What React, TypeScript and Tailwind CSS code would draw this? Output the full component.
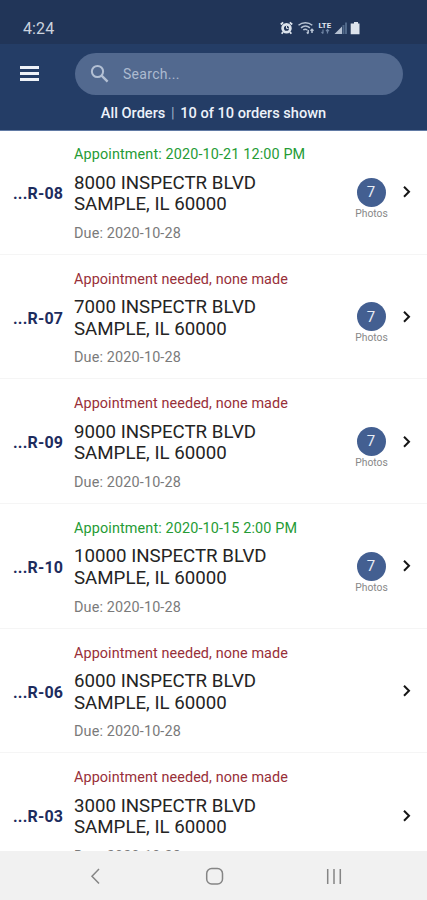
import React from "react";

type Order = { id: string; appointment?: string; street: string; photos?: number };

const orders: Order[] = [
  { id: "...R-08", appointment: "2020-10-21 12:00 PM", street: "8000 INSPECTR BLVD", photos: 7 },
  { id: "...R-07", street: "7000 INSPECTR BLVD", photos: 7 },
  { id: "...R-09", street: "9000 INSPECTR BLVD", photos: 7 },
  { id: "...R-10", appointment: "2020-10-15 2:00 PM", street: "10000 INSPECTR BLVD", photos: 7 },
  { id: "...R-06", street: "6000 INSPECTR BLVD" },
  { id: "...R-03", street: "3000 INSPECTR BLVD" },
];

function StatusIcons() {
  return (
    <svg className="ml-auto mr-[65px] h-[14px] w-[82px]" viewBox="0 0 82 14" fill="none">
      <g stroke="#dce3ec">
        <circle cx="6.5" cy="7.2" r="3.9" strokeWidth="2.7" />
        <path d="M6.5 5v2.4h2" strokeWidth="1" />
        <path d="M.8 3.5 3.2 1.3M12.2 3.5 9.8 1.3M3 11l-1.3 1.7M10 11l1.3 1.7" strokeWidth="1.8" />
      </g>
      <g stroke="#b7c3d4" strokeWidth="1.5">
        <path d="M18.5 4.3c4-3.4 9.8-3.4 13.8 0M21 6.8c2.7-2.2 6.2-2.2 8.9 0M23.3 9c1.3-1 2.7-1 4 0" />
        <path d="M28.2 9v3.5M26.8 11.3l1.4 1.4M32 12V8.500M30.500 9.800 32 8.300l1.500 1.500" />
      </g>
      <text x="38.5" y="6.5" className="font-bold" fontSize="7" fill="#e2e8f0" textLength="12.5" lengthAdjust="spacingAndGlyphs">LTE</text>
      <path d="M43 8.5v4M41.5 11l1.5 1.5M47.5 12.5v-4M46 10l1.5-1.5L49 10" stroke="#7085a5" strokeWidth="1.2" />
      <path d="M54.5 13 62 5.500V13z" fill="#b5c1d2" />
      <path d="M63.5 13V4M66 13V1.500" stroke="#506889" strokeWidth="2" />
      <path d="M74 1h4v1.500h1.500v10.700h-8.800V2.500H74z" fill="#dce3ec" />
    </svg>
  );
}

function OrderRow({ order }: { order: Order }) {
  return (
    <li className="flex h-[124.65px] shrink-0 border-b border-[#f5f5f5]">
      <div className="w-[74px] shrink-0 pl-[13px] pt-[54px] text-[16px] font-bold leading-5 tracking-[0.2px] text-[#1d2c5e]">{order.id}</div>
      <div className="flex-1 whitespace-nowrap pt-[16px]">
        {order.appointment ? (
          <p className="text-[14.4px] leading-[18px] tracking-[0.13px] text-[#259b35]">Appointment: {order.appointment}</p>
        ) : (
          <p className="text-[14.4px] leading-[18px] tracking-[0.09px] text-[#982f38]">Appointment needed, none made</p>
        )}
        <p className="mt-[8.5px] text-[18.7px] leading-[21.6px] text-[#242424]">
          {order.street}
          <br />
          SAMPLE, IL 60000
        </p>
        <p className="mt-[9px] text-[14.4px] leading-[18px] tracking-[0.15px] text-[#7a7a7a]">Due: 2020-10-28</p>
      </div>
      {order.photos !== undefined && (
        <div className="flex w-[40px] shrink-0 flex-col items-center pt-[47.8px]">
          <span className="flex size-[29px] items-center justify-center rounded-full bg-[#435f91] text-[15px] text-[#e8edf6]">{order.photos}</span>
          <span className="ml-[1px] text-[10.3px] leading-[14px] text-[#888]">Photos</span>
        </div>
      )}
      <svg className="ml-[11px] mr-[15px] mt-[55.4px] h-[14px] w-[10px] shrink-0" viewBox="0 0 10 14" fill="none">
        <path d="m2 1.8 5 5-5 5" stroke="#161616" strokeWidth="2" />
      </svg>
    </li>
  );
}

export default function App() {
  return (
    <div className="flex h-[900px] w-[427px] flex-col overflow-hidden bg-white font-['Roboto',sans-serif]">
      <div className="flex h-[44px] shrink-0 items-end bg-[#213558] pb-[9px]">
        <span className="mb-[-1px] ml-[23px] text-[16px] leading-[14px] tracking-[0.1px] text-[#cbd3df]">4:24</span>
        <StatusIcons />
      </div>
      <header className="h-[86px] shrink-0 bg-[#243d66] pt-[9px]">
        <div className="flex items-center">
          <div className="mb-px ml-[20px] flex w-[19px] flex-col gap-[3px]">
            <i className="h-[3px] bg-[#eef2f8]" />
            <i className="h-[3px] bg-[#eef2f8]" />
            <i className="h-[3px] bg-[#eef2f8]" />
          </div>
          <div className="ml-[36px] flex h-[42px] w-[328px] items-center rounded-full bg-[#52698f]">
            <svg className="ml-[15px] size-[20px]" viewBox="0 0 20 20" fill="none" stroke="#b3c0d4">
              <circle cx="7.5" cy="7.5" r="5.6" strokeWidth="2" />
              <path d="m11.6 11.6 6 6" strokeWidth="2.4" />
            </svg>
            <span className="ml-[13px] text-[14px] tracking-[0.3px] text-[#adbbd0]">Search...</span>
          </div>
        </div>
        <p className="mt-[9px] text-center text-[14.6px] font-medium leading-[18px] text-[#edf2fa]">
          All Orders <span className="mx-[2px] font-normal text-[#9dacc4]">|</span> 10 of 10 orders shown
        </p>
      </header>
      <ul className="flex h-[721px] shrink-0 flex-col overflow-hidden shadow-[inset_0_1px_0_#617aa4]">
        {orders.map((o) => <OrderRow key={o.id} order={o} />)}
      </ul>
      <nav className="h-[49px] shrink-0 bg-[#f1f1f1]">
        <svg className="h-[49px] w-[427px]" viewBox="0 0 427 49" fill="none" stroke="#858585" strokeWidth="1.5">
          <path d="m99 18-7 7.2 7 7.2" />
          <rect x="206.7" y="17.5" width="15.8" height="15.5" rx="5" />
          <path d="M327.7 18v15M334 18v15M340.3 18v15" />
        </svg>
      </nav>
    </div>
  );
}
